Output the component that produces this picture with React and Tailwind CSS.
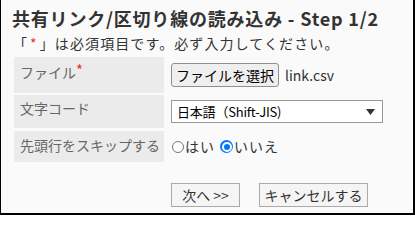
import React from "react";

export default function App() {
  const font = { fontFamily: '"Noto Sans CJK JP", "Noto Sans", sans-serif' };
  return (
    <div
      className="w-[415px] h-[215px] bg-[#fafafa] border-l border-r-2 border-b-2 border-black text-[#333] overflow-hidden"
      style={font}
    >
      <div className="pl-[11px] pt-[5px] text-[18px] leading-[26px] font-bold tracking-[0.8px] text-[#333]">
        共有リンク/区切り線の読み込み - Step 1/2
      </div>
      <div className="pl-[12px] text-[14px] leading-[24px] tracking-[1.1px] text-[#333]">
        「<span className="text-[#e5322d] mx-[2px]">*</span>」は必須項目です。必ず入力してください。
      </div>
      <div className="ml-[13px] mt-[2px] flex flex-col gap-[2px]">
        <div className="flex h-[36px]">
          <div className="w-[150px] bg-[#ebebeb] flex items-start pt-[5px] pl-[6px] text-[14px] leading-[20px] text-[#666]">
            ファイル<span className="text-[#e5322d] text-[15px] leading-[14px] mt-[1px]">*</span>
          </div>
          <div className="flex items-center pl-[7px] gap-[6px] text-[14px]">
            <button className="h-[24px] w-[108px] rounded-[3px] border border-[#8f8f8f] bg-[#efefef] text-[14px] leading-[20px] text-black">
              ファイルを選択
            </button>
            <span className="text-[#333]">link.csv</span>
          </div>
        </div>
        <div className="flex h-[33px]">
          <div className="w-[150px] bg-[#ebebeb] flex items-start pt-[3px] pl-[6px] text-[14px] leading-[20px] text-[#666]">
            文字コード
          </div>
          <div className="flex items-center pl-[7px]">
            <div className="w-[212px] h-[23px] border border-[#999] bg-white flex items-center justify-between pl-[5px] pr-[7px] text-[13px] tracking-[-0.2px] text-black">
              <span>日本語（Shift-JIS)</span>
              <svg width="9" height="6" viewBox="0 0 9 6">
                <path d="M0 0 L9 0 L4.5 6 Z" fill="#333" />
              </svg>
            </div>
          </div>
        </div>
        <div className="flex h-[31px] mt-[1px]">
          <div className="w-[150px] bg-[#ebebeb] flex items-start pt-[4px] pl-[6px] text-[14px] leading-[20px] text-[#666]">
            先頭行をスキップする
          </div>
          <div className="flex items-center pl-[8px] text-[14px] tracking-[1px] text-[#333]">
            <span className="w-[12px] h-[12px] rounded-full border border-[#767676] bg-white inline-block"></span>
            <span className="ml-[1px]">はい</span>
            <span className="ml-[5px] w-[13px] h-[13px] rounded-full bg-[#0075ff] inline-flex items-center justify-center">
              <span className="w-[6px] h-[6px] rounded-full bg-[#0075ff] border-[2px] border-white box-content"></span>
            </span>
            <span className="ml-[1px]">いいえ</span>
          </div>
        </div>
      </div>
      <div className="flex ml-[170px] mt-[21px] gap-[19px]">
        <button className="w-[69px] h-[24px] border border-[#aaa] bg-[#f5f5f5] text-[14px] leading-[20px] text-[#333]">
          次へ &gt;&gt;
        </button>
        <button className="w-[109px] h-[24px] border border-[#aaa] bg-[#f5f5f5] text-[14px] leading-[20px] text-[#333]">
          キャンセルする
        </button>
      </div>
    </div>
  );
}
